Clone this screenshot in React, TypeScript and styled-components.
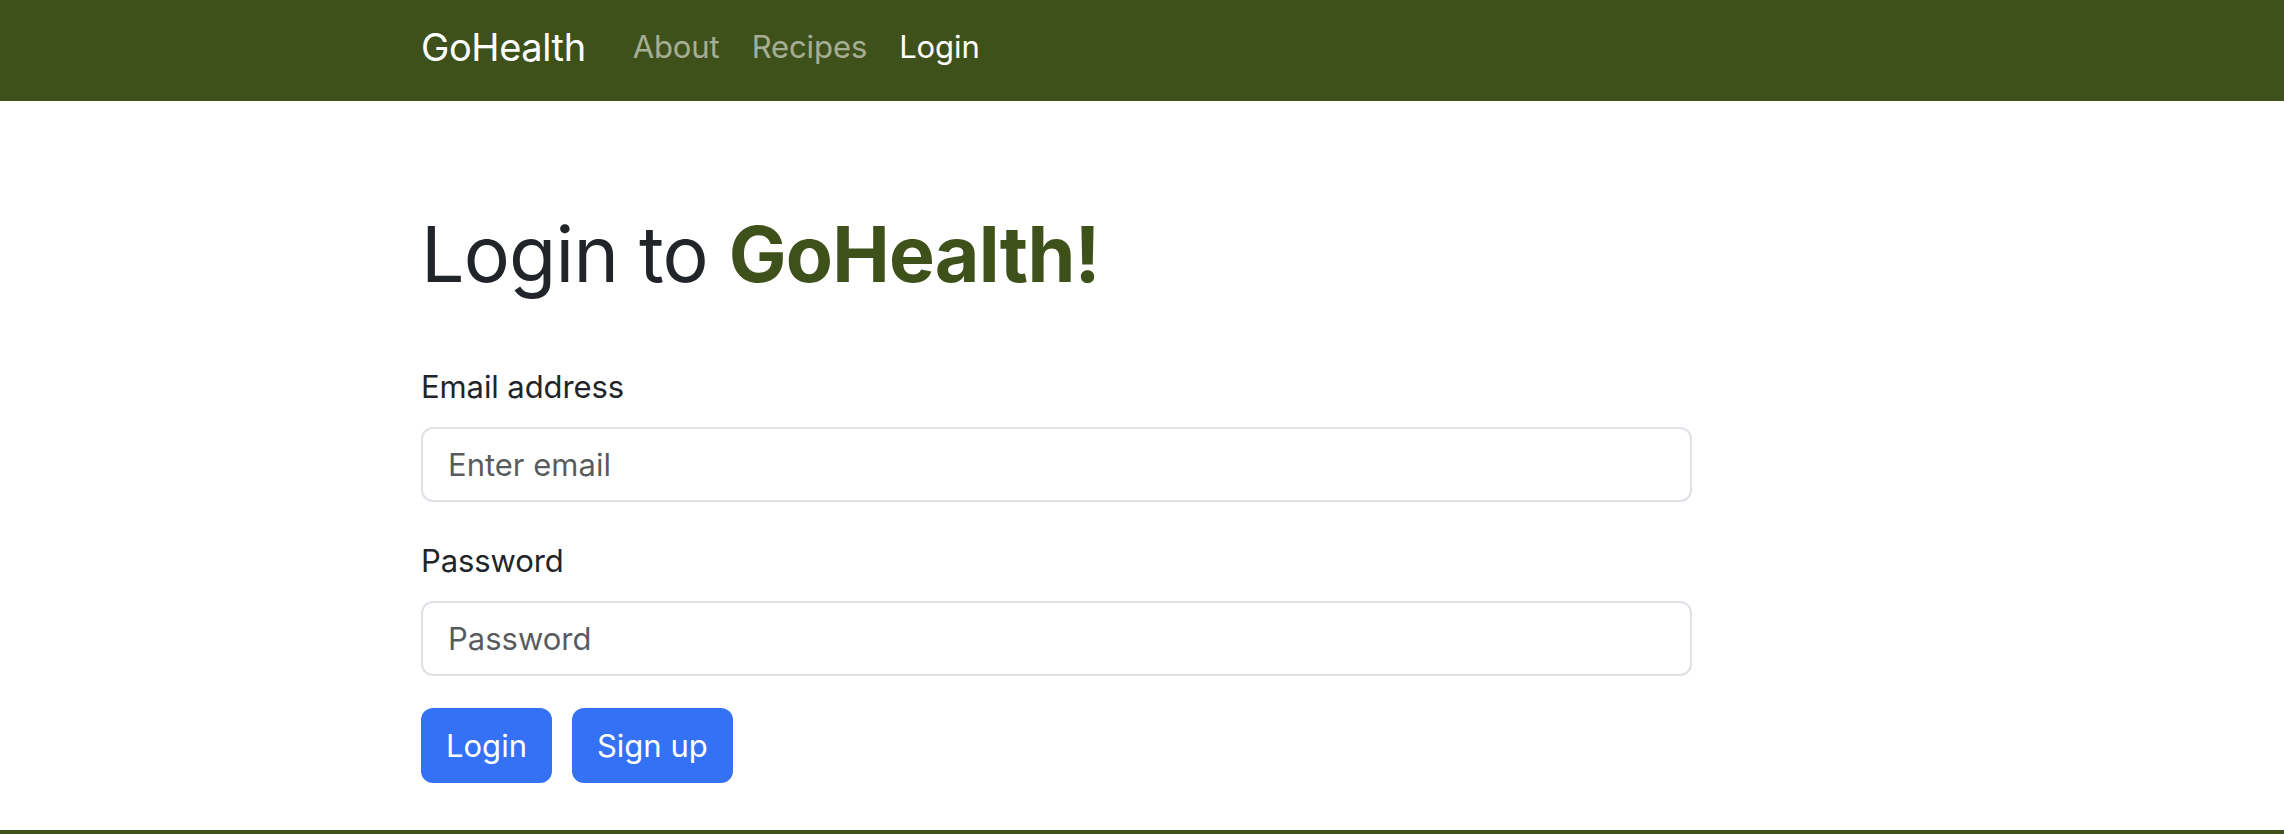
import React from 'react'
import styled, { createGlobalStyle } from 'styled-components'

const green = '#3f511b'
const blue = '#3571f4'

const GlobalStyle = createGlobalStyle`
  html, body {
    margin: 0;
    padding: 0;
    background: #fff;
  }
  body {
    font-family: Inter, 'Noto Sans', 'Liberation Sans', sans-serif;
    color: #212529;
    -webkit-font-smoothing: antialiased;
  }
  * {
    box-sizing: border-box;
  }
`

const Page = styled('div')`
  display: flex;
  flex-direction: column;
  min-height: 100vh;
`

const NavBar = styled('nav')`
  background: ${green};
  height: 101px;
  padding-bottom: 8px;
  display: flex;
  align-items: center;
`

const Container = styled('div')`
  width: 1442px;
  margin: 0 auto;
  display: flex;
  align-items: center;
`

const Brand = styled('a')`
  font-size: 38px;
  line-height: 58px;
  color: #fff;
  text-decoration: none;
  margin-right: 31px;
  letter-spacing: -0.4px;
`

const NavList = styled('ul')`
  display: flex;
  list-style: none;
  margin: 0;
  padding: 0;
`

interface NavLinkProps {
  active?: boolean
}

const NavLink = styled('a')<NavLinkProps>`
  display: block;
  padding: 0 16px;
  font-size: 31px;
  line-height: 46px;
  text-decoration: none;
  letter-spacing: -0.1px;
  color: ${({ active }) => (active ? '#fff' : 'rgba(255, 255, 255, 0.55)')};
`

const Main = styled('main')`
  flex: 1;
`

const Content = styled('div')`
  width: 1442px;
  margin: 0 auto;
  padding-top: 107px;
`

const Title = styled('h1')`
  margin: 0 0 63px;
  font-size: 77px;
  font-weight: 400;
  line-height: 1.2;
  letter-spacing: -0.8px;
`

const TitleBrand = styled('span')`
  color: ${green};
  font-weight: 700;
`

const Form = styled('form')`
  width: 1271px;
`

const Group = styled('div')`
  margin-bottom: 35px;
`

const Label = styled('label')`
  display: block;
  font-size: 31px;
  line-height: 48px;
  margin-bottom: 16px;
  letter-spacing: -0.1px;
`

const Input = styled('input')`
  display: block;
  width: 100%;
  height: 75px;
  padding: 0 25px;
  font-family: inherit;
  font-size: 31px;
  color: #212529;
  background: #fff;
  border: 2px solid #dee2e6;
  border-radius: 12px;
  outline: none;

  &::placeholder {
    color: rgba(33, 37, 41, 0.75);
  }
`

const Actions = styled('div')`
  display: flex;
  gap: 20px;
  margin-top: -3px;
`

const Button = styled('button')`
  height: 75px;
  padding: 0 25px;
  font-family: inherit;
  font-size: 31px;
  color: #fff;
  background: ${blue};
  border: none;
  border-radius: 12px;
  cursor: pointer;
`

const Footer = styled('footer')`
  height: 4px;
  background: ${green};
`

export default function App() {
  return (
    <Page>
      <GlobalStyle />
      <NavBar>
        <Container>
          <Brand href="#">GoHealth</Brand>
          <NavList>
            <li>
              <NavLink href="#">About</NavLink>
            </li>
            <li>
              <NavLink href="#">Recipes</NavLink>
            </li>
            <li>
              <NavLink href="#" active>
                Login
              </NavLink>
            </li>
          </NavList>
        </Container>
      </NavBar>
      <Main>
        <Content>
          <Title>
            Login to <TitleBrand>GoHealth!</TitleBrand>
          </Title>
          <Form onSubmit={e => e.preventDefault()}>
            <Group>
              <Label htmlFor="email">Email address</Label>
              <Input id="email" type="email" placeholder="Enter email" />
            </Group>
            <Group>
              <Label htmlFor="password">Password</Label>
              <Input id="password" type="password" placeholder="Password" />
            </Group>
            <Actions>
              <Button type="submit">Login</Button>
              <Button type="button">Sign up</Button>
            </Actions>
          </Form>
        </Content>
      </Main>
      <Footer />
    </Page>
  )
}
